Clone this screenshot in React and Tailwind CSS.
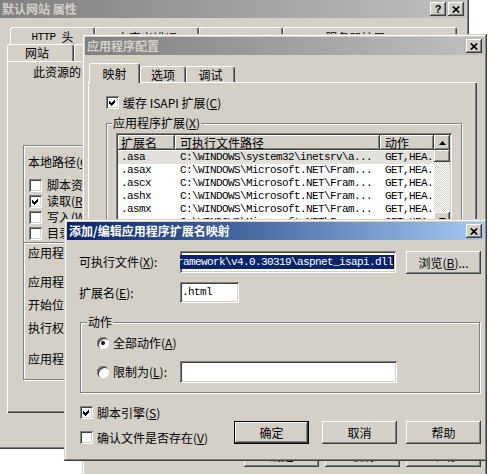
import React from 'react';

const CJK = "font-['Noto_Sans_CJK_SC','Noto_Sans',sans-serif]";
const MONO = "font-['Liberation_Mono','Noto_Sans_CJK_SC',monospace] text-[11px] tracking-[-0.6px]";
const RAISED = 'shadow-[inset_-1px_-1px_0_#404040,inset_1px_1px_0_#ffffff,inset_-2px_-2px_0_#808080]';
const SUNKEN = 'shadow-[inset_1px_1px_0_#808080,inset_-1px_-1px_0_#ffffff,inset_2px_2px_0_#404040,inset_-2px_-2px_0_#d4d0c8]';
const FRAME = 'shadow-[inset_-1px_-1px_0_#404040,inset_1px_1px_0_#d4d0c8,inset_-2px_-2px_0_#808080,inset_2px_2px_0_#ffffff]';
const PANEL = 'shadow-[inset_1px_1px_0_#ffffff,inset_-1px_-1px_0_#404040,inset_-2px_-2px_0_#808080]';
const ETCHED = 'border border-[#808080] shadow-[inset_1px_1px_0_#ffffff,1px_1px_0_#ffffff]';

// accelerator letter, e.g. (C)
const Key = ({ k }) => (
  <>
    (<span className="underline underline-offset-1">{k}</span>)
  </>
);

const XIcon = () => (
  <svg width="8" height="7" viewBox="0 0 8 7">
    <path d="M0.8 0.5L7.2 6.5M7.2 0.5L0.8 6.5" stroke="#000" strokeWidth="1.7" fill="none" />
  </svg>
);

function CapBtn({ children }) {
  return (
    <div className={`w-[16px] h-[14px] bg-[#d4d0c8] ${RAISED} flex items-center justify-center shrink-0`}>
      {children}
    </div>
  );
}

function TitleBar({ title, active, help }) {
  return (
    <div
      className={`h-[18px] flex items-center pl-[2px] pr-[2px] gap-[2px] ${
        active
          ? 'bg-linear-to-r from-[#0a246a] to-[#a6caf0] text-white'
          : 'bg-linear-to-r from-[#808080] to-[#c0c0c0] text-[#d4d0c8]'
      }`}
    >
      <span className="flex-1 text-[12px] font-bold leading-[14px] whitespace-nowrap">{title}</span>
      {help && (
        <CapBtn>
          <span className="font-['Liberation_Sans',sans-serif] font-bold text-[11px] leading-none text-black">?</span>
        </CapBtn>
      )}
      <CapBtn>
        <XIcon />
      </CapBtn>
    </div>
  );
}

function Tab({ className = '', children }) {
  return (
    <div
      className={`flex items-center justify-center text-[12px] leading-[14px] whitespace-nowrap rounded-t-[3px] border-t border-l border-white border-r border-r-[#404040] shadow-[inset_-1px_0_0_#808080] ${className}`}
    >
      {children}
    </div>
  );
}

function Check({ checked, gap = 'ml-[4px]', className = '', children }) {
  return (
    <div className={`flex items-center ${className}`}>
      <div className={`w-[13px] h-[13px] bg-white ${SUNKEN} shrink-0`}>
        {checked && (
          <svg width="13" height="13" viewBox="0 0 13 13">
            <path d="M3 5l2 2 4-4v3l-4 4-2-2z" fill="#000" shapeRendering="crispEdges" />
          </svg>
        )}
      </div>
      <span className={`${gap} text-[12px] leading-[14px] whitespace-nowrap`}>{children}</span>
    </div>
  );
}

function Radio({ checked }) {
  return (
    <div className="w-[12px] h-[12px] rounded-full bg-white shadow-[inset_1px_1px_0_#808080,inset_2px_2px_0_#404040,inset_-1px_-1px_0_#ffffff] flex items-center justify-center shrink-0">
      {checked && <div className="w-[4px] h-[4px] rounded-full bg-black" />}
    </div>
  );
}

function Btn({ className = '', def, children }) {
  return (
    <div
      className={`h-[23px] w-[75px] flex items-center justify-center text-[12px] leading-[14px] bg-[#d4d0c8] ${RAISED} ${
        def ? 'border border-black' : ''
      } ${className}`}
    >
      {children}
    </div>
  );
}

function HeadCell({ className = '', children }) {
  return (
    <div className={`h-[15px] flex items-center text-[12px] leading-[14px] bg-[#d4d0c8] ${RAISED} shrink-0 ${className}`}>
      {children}
    </div>
  );
}

const rows = [
  ['.asa', 'C:\\WINDOWS\\system32\\inetsrv\\a...'],
  ['.asax', 'C:\\WINDOWS\\Microsoft.NET\\Fram...'],
  ['.ascx', 'C:\\WINDOWS\\Microsoft.NET\\Fram...'],
  ['.ashx', 'C:\\WINDOWS\\Microsoft.NET\\Fram...'],
  ['.asmx', 'C:\\WINDOWS\\Microsoft.NET\\Fram...'],
  ['.aspx', 'C:\\WINDOWS\\Microsoft.NET\\Fram...'],
];

const ArrowUp = () => (
  <svg width="7" height="4" viewBox="0 0 7 4">
    <path d="M3.5 0L7 4H0z" fill="#000" />
  </svg>
);
const ArrowDown = () => (
  <svg width="7" height="4" viewBox="0 0 7 4">
    <path d="M0 0h7L3.5 4z" fill="#000" />
  </svg>
);

export default function App() {
  return (
    <div className={`relative w-[489px] h-[474px] overflow-hidden bg-white text-black ${CJK}`}>
      {/* 默认网站 属性 */}
      <div className="absolute left-0 top-0 z-[1] w-[469px] h-[449px] bg-[#d4d0c8] shadow-[inset_-1px_-1px_0_#404040,inset_-2px_-2px_0_#808080]">
        <div className="mr-[3px]">
          <TitleBar title="默认网站 属性" help />
        </div>
        <div className="flex ml-[10px] mt-[9px] h-[17px]">
          <Tab className="w-[85px] pt-[2px]">
            <span className={MONO}>HTTP</span>
            <span className="ml-[6px]">头</span>
          </Tab>
          <Tab className="w-[104px] pt-[3px]">自定义错误</Tab>
          <Tab className="w-[84px] pt-[3px]">ASP.NET</Tab>
          <Tab className="w-[174px] pt-[3px]">服务器扩展 2002</Tab>
        </div>
        <div className="flex ml-[7px] h-[17px]">
          <Tab className="w-[67px] justify-start pl-[17px]">网站</Tab>
          <Tab className="w-[76px]">性能</Tab>
          <Tab className="w-[90px]">ISAPI 筛选器</Tab>
        </div>
        <div className={`ml-[7px] w-[455px] h-[352px] ${PANEL} pt-[4px]`}>
          <div className="pl-[26px] text-[12px] leading-[14px]">此资源的内容来自:</div>
          <div className={`ml-[16px] mt-[66px] w-[430px] h-[235px] ${ETCHED}`}>
            <div className="ml-[4px] mt-[9px] text-[12px] leading-[14px]">
              本地路径<Key k="C" />:
            </div>
            <div className="mt-[8px] ml-[5px] flex flex-col">
              <Check gap="ml-[5px]" className="h-[16px]">脚本资源访问<Key k="T" /></Check>
              <Check gap="ml-[5px]" className="h-[16px]" checked>读取<Key k="R" /></Check>
              <Check gap="ml-[5px]" className="h-[16px]">写入<Key k="W" /></Check>
              <Check gap="ml-[5px]" className="h-[16px]">目录浏览<Key k="B" /></Check>
            </div>
            <div className="mt-[1px] h-[2px] border-t border-[#808080] border-b border-b-white" />
            <div className="ml-[4px] text-[12px] leading-[14px]">
              <div className="mt-[2px]">应用程序设置</div>
              <div className="mt-[15px]">应用程序名<Key k="M" />:</div>
              <div className="mt-[9px]">开始位置:</div>
              <div className="mt-[9px]">执行权限<Key k="P" />:</div>
              <div className="mt-[17px]">应用程序池<Key k="N" />:</div>
            </div>
          </div>
        </div>
      </div>

      {/* 应用程序配置 */}
      <div className={`absolute left-[82px] top-[34px] z-[2] w-[405px] h-[445px] bg-[#d4d0c8] ${FRAME} p-[3px]`}>
        <TitleBar title="应用程序配置" />
        <div className="relative z-10 flex items-end h-[20px] ml-[4px] mt-[8px] -mb-[1px]">
          <Tab className="w-[51px] h-[20px] bg-[#d4d0c8]">映射</Tab>
          <Tab className="w-[46px] h-[16px] mb-[1px]">选项</Tab>
          <Tab className="w-[49px] h-[16px] mb-[1px]">调试</Tab>
        </div>
        <div className={`ml-[3px] w-[389px] h-[354px] ${PANEL} pt-[14px]`}>
          <Check checked className="ml-[18px] h-[13px]">
            缓存 ISAPI 扩展<Key k="C" />
          </Check>
          <div className={`relative ml-[18px] mt-[14px] w-[356px] h-[290px] ${ETCHED}`}>
            <span className="absolute left-[5px] -top-[8px] px-[1px] bg-[#d4d0c8] text-[12px] leading-[14px] whitespace-nowrap">
              应用程序扩展<Key k="X" />
            </span>
            <div className={`ml-[9px] mt-[9px] w-[336px] h-[97px] bg-white ${SUNKEN} p-[2px] flex`}>
              <div className="w-[316px] overflow-hidden">
                <div className="flex h-[15px]">
                  <HeadCell className="w-[57px] pl-[3px]">扩展名</HeadCell>
                  <HeadCell className="w-[205px] pl-[5px]">可执行文件路径</HeadCell>
                  <HeadCell className="w-[54px] pl-[5px]">动作</HeadCell>
                </div>
                <div className="mt-[1px]">
                  {rows.map(([ext, path], i) => (
                    <div
                      key={ext}
                      className={`flex h-[13px] items-center whitespace-nowrap ${MONO} ${i === 0 ? 'bg-[#e2e0da]' : ''}`}
                    >
                      <div className="w-[57px] pl-[3px] shrink-0">{ext}</div>
                      <div className="w-[205px] pl-[5px] shrink-0">{path}</div>
                      <div className="w-[54px] pl-[5px] shrink-0 overflow-hidden">GET,HEA...</div>
                    </div>
                  ))}
                </div>
              </div>
              <div className="w-[16px] flex flex-col">
                <div className={`h-[15px] bg-[#d4d0c8] ${RAISED} flex items-center justify-center`}>
                  <ArrowUp />
                </div>
                <div className={`h-[12px] bg-[#d4d0c8] ${RAISED}`} />
                <div className="flex-1 bg-[image:repeating-conic-gradient(#ffffff_0_25%,#d4d0c8_0_50%)] bg-[length:2px_2px]" />
                <div className={`h-[16px] bg-[#d4d0c8] ${RAISED} flex items-center justify-center`}>
                  <ArrowDown />
                </div>
              </div>
            </div>
          </div>
        </div>
        <div className="flex justify-end gap-[6px] pr-[3px] mt-[8px]">
          <Btn>确定</Btn>
          <Btn>取消</Btn>
          <Btn>帮助</Btn>
        </div>
      </div>

      {/* 添加/编辑应用程序扩展名映射 */}
      <div className={`absolute left-[64px] top-[219px] z-[3] w-[423px] h-[242px] bg-[#d4d0c8] ${FRAME} p-[3px]`}>
        <TitleBar active title="添加/编辑应用程序扩展名映射" />
        <div className="flex items-start mt-[11px] h-[22px]">
          <div className="ml-[12px] w-[101px] h-[22px] flex items-center text-[12px] leading-[14px] whitespace-nowrap">
            可执行文件<Key k="X" />:
          </div>
          <div className={`w-[216px] h-[22px] bg-white ${SUNKEN} px-[2px] flex items-center justify-end overflow-hidden`}>
            <span className={`${MONO} leading-[14px] bg-[#0a246a] text-white whitespace-nowrap`}>
              {'C:\\WINDOWS\\Microsoft.NET\\Framework\\v4.0.30319\\aspnet_isapi.dll'}
            </span>
            <span className="w-px h-[14px] bg-black shrink-0" />
          </div>
          <Btn className="ml-[10px] h-[22px]">
            浏览<Key k="B" />...
          </Btn>
        </div>
        <div className="flex items-start mt-[9px] h-[21px]">
          <div className="ml-[12px] w-[101px] h-[21px] flex items-center text-[12px] leading-[14px] whitespace-nowrap">
            扩展名<Key k="E" />:
          </div>
          <div className={`w-[59px] h-[21px] bg-white ${SUNKEN} pl-[2px] flex items-center`}>
            <span className={MONO}>.html</span>
          </div>
        </div>
        <div className={`relative ml-[13px] mt-[19px] w-[400px] h-[71px] ${ETCHED}`}>
          <span className="absolute left-[6px] -top-[8px] px-[1px] bg-[#d4d0c8] text-[12px] leading-[14px]">动作</span>
          <div className="flex items-center h-[22px] mt-[9px] ml-[16px]">
            <Radio checked />
            <span className="ml-[4px] text-[12px] leading-[14px] whitespace-nowrap">
              全部动作<Key k="A" />
            </span>
          </div>
          <div className="flex items-center h-[22px] mt-[7px] ml-[16px]">
            <Radio />
            <span className="ml-[4px] w-[67px] text-[12px] leading-[14px] whitespace-nowrap">
              限制为<Key k="L" />:
            </span>
            <div className={`w-[217px] h-[22px] bg-white ${SUNKEN}`} />
          </div>
        </div>
        <div className="flex items-end mt-[13px]">
          <div className="flex-1 ml-[13px] flex flex-col gap-[12px]">
            <Check checked className="h-[13px]">
              脚本引擎<Key k="S" />
            </Check>
            <Check className="h-[13px]">
              确认文件是否存在<Key k="V" />
            </Check>
          </div>
          <Btn def>确定</Btn>
          <Btn className="ml-[13px]">取消</Btn>
          <Btn className="ml-[9px] mr-[3px]">帮助</Btn>
        </div>
      </div>
    </div>
  );
}
